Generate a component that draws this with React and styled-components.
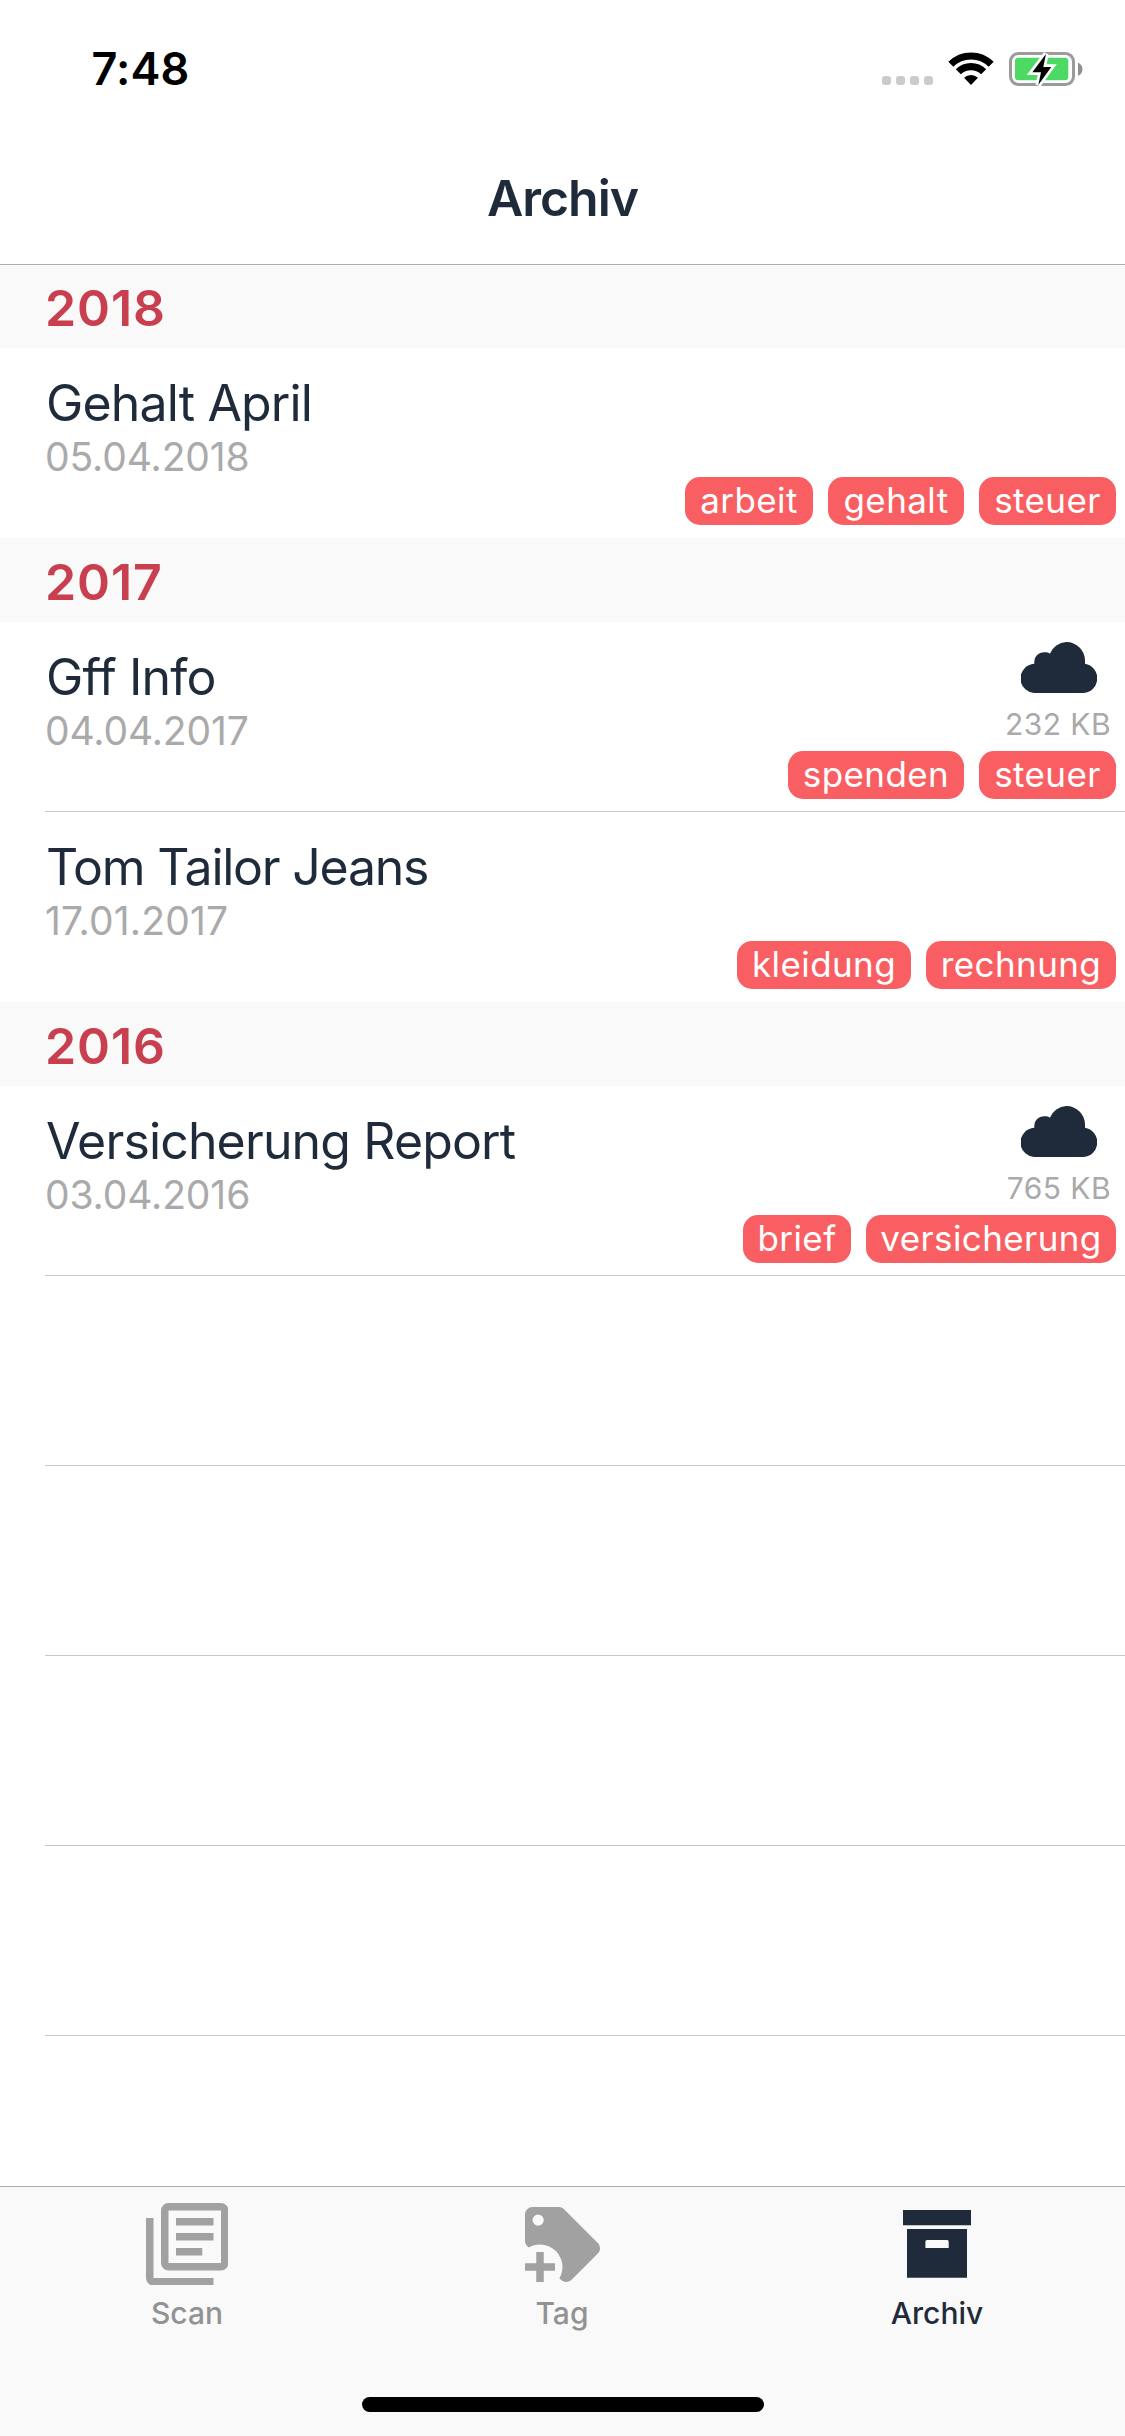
import React from "react";
import styled, { createGlobalStyle } from "styled-components";

const color = {
  ink: "#1f2b3a",
  year: "#c8404f",
  tag: "#f95f62",
  muted: "#aaaaaa",
  bar: "#f9f9f9",
  hairline: "#c8c7cc",
  barLine: "#adadad",
  tabIcon: "#a1a1a1",
  tabLabel: "#929292",
};

const GlobalStyle = createGlobalStyle`
  *, *::before, *::after { box-sizing: border-box; }
  body {
    margin: 0;
    background: #ffffff;
    font-family: Inter, "Liberation Sans", sans-serif;
    -webkit-font-smoothing: antialiased;
  }
`;

const Screen = styled.div`
  display: flex;
  flex-direction: column;
  width: 1125px;
  height: 2436px;
  overflow: hidden;
  background: #ffffff;
`;

const StatusBar = styled.div`
  display: flex;
  flex: none;
  justify-content: space-between;
  align-items: flex-start;
  height: 132px;
  padding: 42px 42px 0 91.5px;
`;

const Clock = styled.time`
  color: #000000;
  font-size: 45px;
  font-weight: 600;
  line-height: 54px;
  letter-spacing: 0.1px;
`;

const StatusIcons = styled.div`
  display: flex;
  gap: 15px;
  align-items: flex-start;
  height: 34px;
  margin-top: 10px;
`;

const SignalDots = styled.div`
  display: flex;
  gap: 5px;
  align-self: flex-end;
  margin-bottom: 1px;
`;

const SignalDot = styled.span`
  width: 9px;
  height: 9px;
  border-radius: 3px;
  background: #cbcbcb;
`;

const NavBar = styled.header`
  position: relative;
  flex: none;
  height: 132px;
  box-shadow: 0 1px 0 ${color.barLine};
`;

const NavTitle = styled.h1`
  margin: 0;
  color: ${color.ink};
  font-size: 50px;
  font-weight: 600;
  line-height: 132px;
  letter-spacing: -1.05px;
  text-align: center;
`;

const List = styled.main`
  flex: 1;
  min-height: 0;
  overflow: hidden;
`;

const YearHeader = styled.h2`
  height: 84px;
  margin: 0;
  padding: 4px 0 0 45px;
  background: ${color.bar};
  color: ${color.year};
  font-size: 50px;
  font-weight: 600;
  line-height: 80px;
  letter-spacing: 0.9px;
`;

const Row = styled.article`
  display: flex;
  justify-content: space-between;
  height: 190px;
  margin-left: 45px;
  border-bottom: 1px solid ${(p) => (p.$line ? color.hairline : "transparent")};
`;

const Summary = styled.div`
  padding-top: 25px;
`;

const DocTitle = styled.h3`
  margin: 0 0 0 1px;
  color: ${color.ink};
  font-size: 50px;
  font-weight: 400;
  line-height: 60px;
  letter-spacing: ${(p) => p.$tracking ?? -0.85}px;
  white-space: nowrap;
`;

const DocDate = styled.p`
  margin: 0;
  color: ${color.muted};
  font-size: 39px;
  line-height: 47px;
  letter-spacing: ${(p) => p.$tracking ?? -0.1}px;
`;

const Details = styled.div`
  display: flex;
  flex-direction: column;
  align-items: flex-end;
  justify-content: space-between;
  padding: 20px 9px 12px 0;
`;

const Remote = styled.div`
  display: flex;
  flex-direction: column;
  align-items: flex-end;
  gap: 13px;
`;

const Cloud = styled.svg`
  display: block;
  margin-right: 19px;
`;

const FileSize = styled.span`
  margin-right: 5px;
  color: ${color.muted};
  font-size: 30px;
  line-height: 36px;
  letter-spacing: 0.45px;
`;

const Tags = styled.div`
  display: flex;
  gap: 15px;
  margin-top: auto;
`;

const TagPill = styled.span`
  width: ${(p) => p.$width}px;
  height: 48px;
  border-radius: 15px;
  background: ${color.tag};
  color: #ffffff;
  font-size: 35px;
  line-height: 46px;
  letter-spacing: 0.4px;
  text-align: center;
`;

const TabBar = styled.footer`
  flex: none;
  height: 250px;
  border-top: 1px solid ${color.barLine};
  background: ${color.bar};
`;

const Tabs = styled.nav`
  display: grid;
  grid-template-columns: repeat(3, 1fr);
  height: 210px;
`;

const Tab = styled.div`
  display: flex;
  flex-direction: column;
  align-items: center;
  padding: 12px 1px 0 0;
  color: ${(p) => (p.$active ? color.ink : color.tabIcon)};
`;

const TabIcon = styled.div`
  display: flex;
  align-items: center;
  justify-content: center;
  height: 90px;
`;

const TabLabel = styled.span`
  margin-top: 6px;
  color: ${(p) => (p.$active ? color.ink : color.tabLabel)};
  font-size: 30px;
  font-weight: 500;
  line-height: 36px;
`;

const HomeIndicator = styled.div`
  width: 402px;
  height: 15px;
  margin-left: 362px;
  border-radius: 7.5px;
  background: #000000;
`;

function WifiIcon() {
  return (
    <svg width="46" height="33" viewBox="0 0 46 33" fill="none">
      <path d="M2.85 12.35A28.5 28.5 0 0 1 43.15 12.35" stroke="#000" strokeWidth="7.1" />
      <path d="M10.34 19.84A17.9 17.9 0 0 1 35.66 19.84" stroke="#000" strokeWidth="7.1" />
      <path d="M23 33L16.07 25.8A9.8 9.8 0 0 1 29.93 25.8Z" fill="#000" />
    </svg>
  );
}

function BatteryIcon() {
  const bolt = "M37 2L23.3 20.3H32L29.3 33L42.3 15H34.3Z";
  return (
    <svg width="74" height="34" viewBox="0 0 74 34" overflow="visible">
      <rect x="1.5" y="1.5" width="63" height="31" rx="8" fill="none" stroke="#9b9b9b" strokeWidth="3" />
      <rect x="6" y="5.8" width="53.3" height="22.4" rx="3.5" fill="#4cd964" />
      <path d="M69 10.7C72 11.8 73.4 14.2 73.4 17.2S72 22.6 69 23.7Z" fill="#909090" />
      <path d={bolt} fill="#fff" stroke="#fff" strokeWidth="5.5" />
      <path d={bolt} fill="#000" />
    </svg>
  );
}

function CloudIcon() {
  return (
    <Cloud width="76" height="51" viewBox="0 0 76 51">
      <path
        fill={color.ink}
        d="M14.9 51A14.6 14.6 0 0 1 13.3 21.8V19.5A9.3 9.3 0 0 1 22.6 10.3H25.3Q27.7 10.4 28.9 11.8A18.3 18.3 0 0 1 45.3 0A18.6 18.6 0 0 1 64 18.7V21.8A14.7 14.7 0 0 1 61.5 51Z"
      />
    </Cloud>
  );
}

function ScanIcon() {
  return (
    <svg width="82.5" height="82.5" viewBox="0 0 22 22" fill="currentColor">
      <path
        fillRule="evenodd"
        d="M6 0h14a2 2 0 0 1 2 2v14a2 2 0 0 1-2 2H6a2 2 0 0 1-2-2V2a2 2 0 0 1 2-2zM6 2v14h14V2z"
      />
      <path d="M0 4h2v16h16v2H2a2 2 0 0 1-2-2z" />
      <path d="M8 4h10v2H8zM8 8h10v2H8zM8 12h7v2H8z" />
    </svg>
  );
}

function AddTagIcon() {
  return (
    <svg width="75" height="75" viewBox="0 0 20 20" fill="currentColor">
      <path
        fillRule="evenodd"
        d="M2 0h7c.55 0 1.05.22 1.41.59l9 9c.37.36.59.86.59 1.41s-.22 1.05-.59 1.42l-7 7c-.37.36-.87.58-1.41.58s-1.05-.22-1.41-.58l-.41-.42c.52-.88.82-1.9.82-3a6 6 0 0 0-6-6c-1.1 0-2.12.3-3 .82l-.42-.4C.23 10.05 0 9.55 0 9V2a2 2 0 0 1 2-2zM3.5 2a1.5 1.5 0 1 0 0 3a1.5 1.5 0 1 0 0-3z"
      />
      <path d="M3 12h2v3h3v2H5v3H3v-3H0v-2h3z" />
    </svg>
  );
}

function ArchiveIcon() {
  return (
    <svg width="68" height="68" viewBox="0 0 68 68" fill="currentColor">
      <path d="M0 0H68V15.3H0Z" />
      <path
        fillRule="evenodd"
        d="M4 19H64V67.8H4ZM24 30A1.6 1.6 0 0 0 22.4 31.6V38H45.7V31.6A1.6 1.6 0 0 0 44.1 30Z"
      />
    </svg>
  );
}

const sections = [
  {
    year: "2018",
    docs: [
      {
        title: "Gehalt April",
        date: "05.04.2018",
        tags: [
          { name: "arbeit", width: 128 },
          { name: "gehalt", width: 136 },
          { name: "steuer", width: 137 },
        ],
      },
    ],
  },
  {
    year: "2017",
    docs: [
      {
        title: "Gff Info",
        date: "04.04.2017",
        size: "232 KB",
        line: true,
        tags: [
          { name: "spenden", width: 176 },
          { name: "steuer", width: 137 },
        ],
      },
      {
        title: "Tom Tailor Jeans",
        titleTracking: -1.25,
        date: "17.01.2017",
        dateTracking: 0.2,
        tags: [
          { name: "kleidung", width: 174 },
          { name: "rechnung", width: 190 },
        ],
      },
    ],
  },
  {
    year: "2016",
    docs: [
      {
        title: "Versicherung Report",
        date: "03.04.2016",
        size: "765 KB",
        line: true,
        tags: [
          { name: "brief", width: 108 },
          { name: "versicherung", width: 250 },
        ],
      },
    ],
  },
];

const tabs = [
  { label: "Scan", Icon: ScanIcon },
  { label: "Tag", Icon: AddTagIcon },
  { label: "Archiv", Icon: ArchiveIcon, active: true },
];

const emptyRows = [0, 1, 2, 3];

function DocumentRow({ doc }) {
  return (
    <Row $line={doc.line}>
      <Summary>
        <DocTitle $tracking={doc.titleTracking}>{doc.title}</DocTitle>
        <DocDate $tracking={doc.dateTracking}>{doc.date}</DocDate>
      </Summary>
      <Details>
        {doc.size && (
          <Remote>
            <CloudIcon />
            <FileSize>{doc.size}</FileSize>
          </Remote>
        )}
        <Tags>
          {doc.tags.map((tag) => (
            <TagPill key={tag.name} $width={tag.width}>
              {tag.name}
            </TagPill>
          ))}
        </Tags>
      </Details>
    </Row>
  );
}

export default function App() {
  return (
    <>
      <GlobalStyle />
      <Screen>
        <StatusBar>
          <Clock>7:48</Clock>
          <StatusIcons>
            <SignalDots>
              <SignalDot />
              <SignalDot />
              <SignalDot />
              <SignalDot />
            </SignalDots>
            <WifiIcon />
            <BatteryIcon />
          </StatusIcons>
        </StatusBar>
        <NavBar>
          <NavTitle>Archiv</NavTitle>
        </NavBar>
        <List>
          {sections.map((section) => (
            <section key={section.year}>
              <YearHeader>{section.year}</YearHeader>
              {section.docs.map((doc) => (
                <DocumentRow key={doc.title} doc={doc} />
              ))}
            </section>
          ))}
          {emptyRows.map((n) => (
            <Row key={n} $line />
          ))}
        </List>
        <TabBar>
          <Tabs>
            {tabs.map(({ label, Icon, active }) => (
              <Tab key={label} $active={active}>
                <TabIcon>
                  <Icon />
                </TabIcon>
                <TabLabel $active={active}>{label}</TabLabel>
              </Tab>
            ))}
          </Tabs>
          <HomeIndicator />
        </TabBar>
      </Screen>
    </>
  );
}
